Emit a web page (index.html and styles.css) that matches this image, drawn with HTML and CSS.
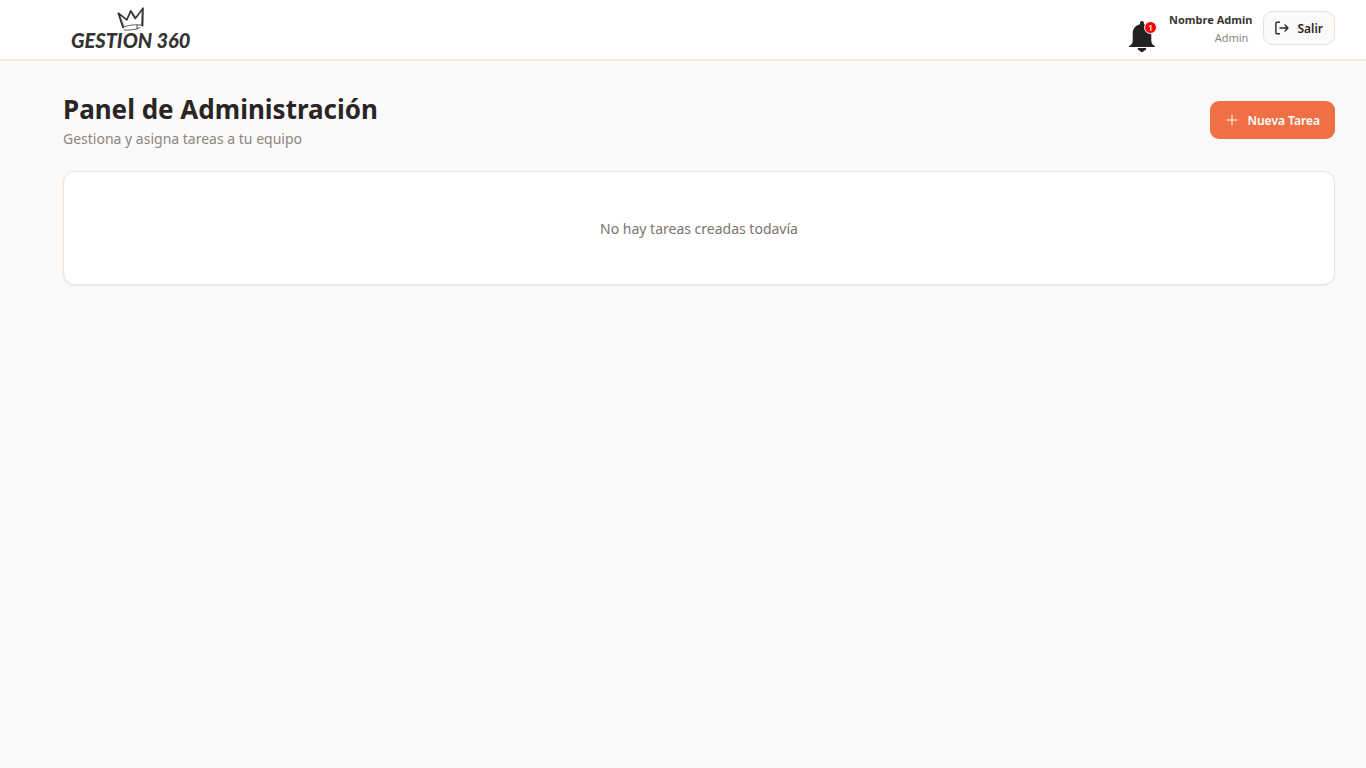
FILE: index.html
```html
<!DOCTYPE html>
<html lang="es">
<head>
<meta charset="utf-8">
<meta name="viewport" content="width=device-width, initial-scale=1">
<title>Gestion 360 - Panel de Administración</title>
<link rel="stylesheet" href="styles.css">
</head>
<body>
<header class="topbar">
  <div class="logo">
    <svg class="crown" viewBox="0 0 28 24" aria-hidden="true">
      <path d="M6 20.500 1.300 6.200l8.600 6.600 3.800-9 4.800 7.400L26 1.200l-.4 17.600"/>
      <path d="M2 6.600 7 20M25.200 2.500l-.6 16M10 12.200l3.600-7.400 4.400 7.200" class="thin"/>
      <path d="M6 20.300c4-2 13-3.400 19.400-1.900M7 23c5 .6 12-.4 16-2.400M20 18v4" class="thin"/>
    </svg>
    <span class="wordmark">GESTION 360</span>
  </div>
  <div class="account">
    <button class="bell" type="button" aria-label="Notificaciones">
      <svg viewBox="0 0 26 32" aria-hidden="true">
        <path d="M13 0c1.200 0 1.900.8 1.900 1.900v1.300c4.500.9 7.400 4.500 7.400 9v7.600c0 2.700 1.400 4.200 3.700 5.400V26H0v-.8c2.300-1.200 3.700-2.700 3.700-5.400v-7.600c0-4.500 2.900-8.100 7.400-9V1.900C11.100.8 11.800 0 13 0zM8.800 27h8.400v.8c0 1-.9 1.700-2.200 1.900-.3.900-1 1.300-2 1.300s-1.700-.4-2-1.300c-1.300-.2-2.200-.9-2.200-1.900z"/>
      </svg>
      <span class="badge">1</span>
    </button>
    <div class="user">
      <span class="user-name">Nombre Admin</span>
      <span class="user-role">Admin</span>
    </div>
    <button class="logout" type="button">
      <svg viewBox="0 0 14 14" aria-hidden="true"><path d="M4.500 1.200H2.200a1.300 1.300 0 0 0-1.300 1.300v9a1.300 1.300 0 0 0 1.300 1.300h2.300M5 7h8M10 4l3 3-3 3"/></svg>
      Salir
    </button>
  </div>
</header>
<main class="page">
  <div class="page-head">
    <div>
      <h1>Panel de Administración</h1>
      <p class="subtitle">Gestiona y asigna tareas a tu equipo</p>
    </div>
    <button class="primary" type="button">
      <svg viewBox="0 0 14 14" aria-hidden="true"><path d="M7 2v10M2 7h10"/></svg>
      Nueva Tarea
    </button>
  </div>
  <section class="card">
    <p>No hay tareas creadas todavía</p>
  </section>
</main>
</body>
</html>
```

FILE: styles.css
```css
* {
  box-sizing: border-box;
}

body {
  margin: 0;
  min-height: 100vh;
  background: #fbfaf8;
  color: #292524;
  font-family: "Noto Sans", "Open Sans", sans-serif;
}

h1,
p {
  margin: 0;
}

button {
  font-family: inherit;
  cursor: pointer;
}

.topbar {
  display: flex;
  justify-content: space-between;
  align-items: flex-start;
  min-height: 61px;
  padding: 7px 31px 0 64px;
  background: #fff;
  border-bottom: 2px solid #f3ede9;
}

.logo {
  display: flex;
  flex-direction: column;
  align-items: center;
  padding-left: 7px;
}

.crown {
  width: 28px;
  height: 24px;
  fill: none;
  stroke: #333;
  stroke-width: 1.6;
  stroke-linejoin: round;
  stroke-linecap: round;
}

.crown .thin {
  stroke-width: 0.8;
}

.wordmark {
  font-family: Lato, sans-serif;
  font-size: 20px;
  font-style: italic;
  font-weight: 900;
  line-height: 18px;
  color: #333;
}

.account {
  display: flex;
  align-items: flex-start;
}

.bell {
  position: relative;
  width: 26px;
  height: 32px;
  margin: 14px 14px 0 0;
  padding: 0;
  border: 0;
  background: none;
}

.bell svg {
  display: block;
  width: 26px;
  height: 32px;
  fill: #222;
}

.badge {
  position: absolute;
  top: 0;
  right: -2px;
  width: 13px;
  height: 13px;
  border: 1px solid #fff;
  border-radius: 50%;
  background: #f00;
  color: #fff;
  font-size: 8px;
  font-weight: 600;
  line-height: 11px;
  text-align: center;
}

.user {
  display: flex;
  flex-direction: column;
  align-items: flex-end;
  margin: 4px 11px 0 0;
  line-height: 18px;
}

.user-name {
  font-size: 11px;
  font-weight: 700;
  color: #3a3635;
}

.user-role {
  padding-right: 4px;
  font-size: 11px;
  color: #8c8580;
}

.logout {
  display: flex;
  align-items: center;
  gap: 8px;
  height: 34px;
  margin-top: 4px;
  padding: 0 11px;
  border: 1px solid #e7e2de;
  border-radius: 9px;
  background: #fbfaf8;
  color: #292524;
  font-size: 12px;
  font-weight: 600;
}

.logout svg,
.primary svg {
  width: 14px;
  height: 14px;
  fill: none;
  stroke: currentColor;
  stroke-width: 1.4;
  stroke-linecap: round;
  stroke-linejoin: round;
}

.page {
  padding: 29px 31px 32px 63px;
}

.page-head {
  display: flex;
  justify-content: space-between;
  align-items: center;
  margin-bottom: 21px;
}

h1 {
  font-size: 26px;
  font-weight: 700;
  line-height: 38px;
}

.subtitle {
  font-size: 14px;
  line-height: 22px;
  color: #8c8580;
}

.primary {
  display: flex;
  align-items: center;
  gap: 8px;
  height: 38px;
  padding: 0 15px;
  border: 0;
  border-radius: 9px;
  background: #ee7044;
  color: #fff;
  font-size: 12px;
  font-weight: 600;
}

.primary svg {
  stroke-width: 1;
}

.card {
  padding: 46px 24px 44px;
  border: 1px solid #e9e5e2;
  border-radius: 12px;
  background: #fff;
  box-shadow: 0 1px 2px rgba(41, 37, 36, 0.08);
  text-align: center;
}

.card p {
  font-size: 14px;
  line-height: 22px;
  color: #7c746e;
}
```
